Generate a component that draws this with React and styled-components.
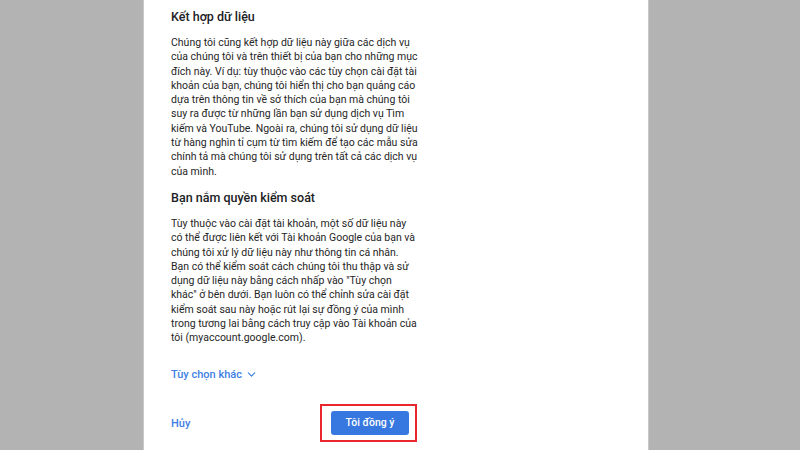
import React from "react";
import styled, { createGlobalStyle } from "styled-components";

const GlobalStyle = createGlobalStyle`
  html, body {
    margin: 0;
    padding: 0;
  }
  body {
    font-family: Roboto, "Noto Sans", "Liberation Sans", sans-serif;
    background: #b3b3b3;
  }
`;

const sections = [
  {
    title: "Kết hợp dữ liệu",
    lines: [
      "Chúng tôi cũng kết hợp dữ liệu này giữa các dịch vụ",
      "của chúng tôi và trên thiết bị của bạn cho những mục",
      "đích này. Ví dụ: tùy thuộc vào các tùy chọn cài đặt tài",
      "khoản của bạn, chúng tôi hiển thị cho bạn quảng cáo",
      "dựa trên thông tin về sở thích của bạn mà chúng tôi",
      "suy ra được từ những lần bạn sử dụng dịch vụ Tìm",
      "kiếm và YouTube. Ngoài ra, chúng tôi sử dụng dữ liệu",
      "từ hàng nghìn tỉ cụm từ tìm kiếm để tạo các mẫu sửa",
      "chính tả mà chúng tôi sử dụng trên tất cả các dịch vụ",
      "của mình.",
    ],
  },
  {
    title: "Bạn nắm quyền kiểm soát",
    lines: [
      "Tùy thuộc vào cài đặt tài khoản, một số dữ liệu này",
      "có thể được liên kết với Tài khoản Google của bạn và",
      "chúng tôi xử lý dữ liệu này như thông tin cá nhân.",
      "Bạn có thể kiểm soát cách chúng tôi thu thập và sử",
      "dụng dữ liệu này bằng cách nhấp vào \"Tùy chọn",
      "khác\" ở bên dưới. Bạn luôn có thể chỉnh sửa cài đặt",
      "kiểm soát sau này hoặc rút lại sự đồng ý của mình",
      "trong tương lai bằng cách truy cập vào Tài khoản của",
      "tôi (myaccount.google.com).",
    ],
  },
];

const App = () => {
  return (
    <>
      <GlobalStyle />
      <Page>
        <Panel>
          <Content>
            {sections.map((s, i) => (
              <Section key={i}>
                <Title>{s.title}</Title>
                <Paragraph>
                  {s.lines.map((line, j) => (
                    <Line key={j}>{line}</Line>
                  ))}
                </Paragraph>
              </Section>
            ))}

            <MoreLink>
              Tùy chọn khác
              <svg width="11" height="11" viewBox="0 0 24 24" fill="none">
                <path
                  d="M5 8.5l7 7 7-7"
                  stroke="currentColor"
                  strokeWidth="2.6"
                  strokeLinecap="round"
                  strokeLinejoin="round"
                />
              </svg>
            </MoreLink>

            <Footer>
              <CancelButton>Hủy</CancelButton>
              <Highlight>
                <AgreeButton>Tôi đồng ý</AgreeButton>
              </Highlight>
            </Footer>
          </Content>
        </Panel>
      </Page>
    </>
  );
};

const Page = styled.div`
  width: 800px;
  height: 450px;
  overflow: hidden;
  display: flex;
  justify-content: center;
  background: #b3b3b3;
  padding-right: 8px;
  box-sizing: border-box;
`;

const Panel = styled.div`
  width: 504px;
  height: 100%;
  background: #ffffff;
  box-shadow: 0 0 0 1px #c8c8c8;
`;

const Content = styled.div`
  width: 248px;
  padding: 9px 0 0 27px;
  display: flex;
  flex-direction: column;
`;

const Section = styled.div`
  display: flex;
  flex-direction: column;
  gap: 11px;
  margin-bottom: 11px;
`;

const Title = styled.div`
  font-size: 12.5px;
  line-height: 16px;
  font-weight: 500;
  color: #202124;
`;

const Paragraph = styled.div`
  font-size: 10.5px;
  line-height: 14.3px;
  color: #262626;
`;

const Line = styled.div`
  white-space: nowrap;
`;

const MoreLink = styled.div`
  margin-top: 10px;
  display: flex;
  align-items: center;
  gap: 4px;
  font-size: 11px;
  line-height: 16px;
  font-weight: 500;
  color: #3f7fe3;
`;

const Footer = styled.div`
  margin-top: 21px;
  width: 246px;
  display: flex;
  justify-content: space-between;
  align-items: center;
`;

const CancelButton = styled.div`
  font-size: 11px;
  font-weight: 500;
  color: #3f7fe3;
  padding-top: 2px;
`;

const Highlight = styled.div`
  display: flex;
  padding: 5px 6px 5px 9px;
  border: 2px solid #e8262b;
`;

const AgreeButton = styled.div`
  width: 78px;
  height: 24px;
  border-radius: 3px;
  background: #3678e0;
  color: #ffffff;
  font-size: 10.5px;
  font-weight: 500;
  display: flex;
  align-items: center;
  justify-content: center;
`;

export default App;
